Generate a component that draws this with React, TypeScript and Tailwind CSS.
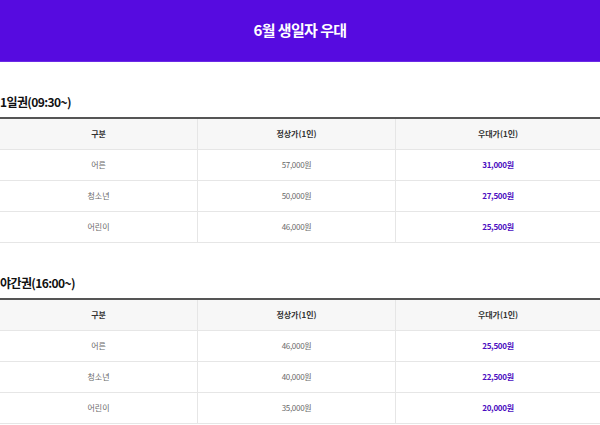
import React from "react";

type Row = { name: string; normal: string; sale: string };

const day: Row[] = [
  { name: "어른", normal: "57,000원", sale: "31,000원" },
  { name: "청소년", normal: "50,000원", sale: "27,500원" },
  { name: "어린이", normal: "46,000원", sale: "25,500원" },
];
const night: Row[] = [
  { name: "어른", normal: "46,000원", sale: "25,500원" },
  { name: "청소년", normal: "40,000원", sale: "22,500원" },
  { name: "어린이", normal: "35,000원", sale: "20,000원" },
];

function Section({ title, rows }: { title: string; rows: Row[] }) {
  return (
    <section className="pt-[30px]">
      <h2 className="h-[20px] leading-[20px] mb-[5px] text-[12px] font-bold text-[#111] tracking-[-0.6px]">
        {title}
      </h2>
      <div className="border-t-2 border-[#555]">
        <div className="grid grid-cols-[198px_198px_1fr] bg-[#f7f7f7] border-b border-[#e6e6e6] h-[31px] text-[8px] font-bold text-[#333]">
          <div className="flex items-center justify-center border-r border-[#e6e6e6]">구분</div>
          <div className="flex items-center justify-center border-r border-[#e6e6e6]">정상가(1인)</div>
          <div className="flex items-center justify-center">우대가(1인)</div>
        </div>
        {rows.map((r) => (
          <div
            key={r.name}
            className="grid grid-cols-[198px_198px_1fr] border-b border-[#e6e6e6] h-[31px] text-[8px]"
          >
            <div className="flex items-center justify-center border-r border-[#e6e6e6] text-[#6a6a6a]">{r.name}</div>
            <div className="flex items-center justify-center border-r border-[#e6e6e6] text-[#6a6a6a] tracking-[-0.3px]">{r.normal}</div>
            <div className="flex items-center justify-center font-bold text-[#4a0cc0] tracking-[-0.3px]">{r.sale}</div>
          </div>
        ))}
      </div>
    </section>
  );
}

export default function App() {
  return (
    <div
      className="w-[600px] h-[425px] overflow-hidden bg-white"
      style={{ fontFamily: '"Noto Sans CJK KR", "Noto Sans", sans-serif' }}
    >
      <header className="h-[62px] bg-[#560be0] border-b border-[#6b2ae6] flex items-center justify-center">
        <h1 className="text-white text-[15px] font-bold tracking-[-0.6px]">6월 생일자 우대</h1>
      </header>
      <Section title="1일권(09:30~)" rows={day} />
      <Section title="야간권(16:00~)" rows={night} />
    </div>
  );
}
